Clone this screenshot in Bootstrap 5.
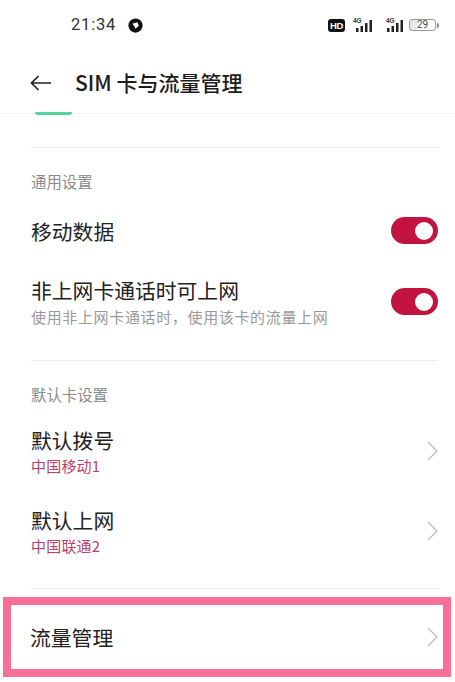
<!DOCTYPE html>
<html lang="zh-CN"><head><meta charset="utf-8">
<link rel="stylesheet" href="https://cdn.jsdelivr.net/npm/bootstrap@5.3.0/dist/css/bootstrap.min.css">
<style>
html,body{height:682px;overflow:hidden;background:#fff}
body{width:455px;font-family:"Noto Sans CJK SC","Noto Sans",sans-serif;color:#222}
.stat{height:52px;padding:0 16px 2px 71px}
.clock{font-family:Roboto,sans-serif;font-size:16.5px;letter-spacing:.8px;color:#333;line-height:1}
.dot{margin-left:12px}
.hd{font:700 9.5px/13px "Liberation Sans",sans-serif;background:#111;color:#fff;border-radius:3px;width:17px;height:13px;text-align:center;letter-spacing:-.3px}
.sig{position:relative;width:20px;height:13px;margin-left:8px}
.sig svg{display:block}
.sig b{position:absolute;left:0;top:-1px;font:700 6.5px/1 "Liberation Sans",sans-serif;color:#333}
.sig2{width:21px;margin-left:10px}
.sig2 b{left:3px}
.batt{width:27px;height:12px;margin-left:5px;border:1.3px solid #999;border-radius:3px;font:400 10px/10px Roboto,sans-serif;color:#444;text-align:center;background:linear-gradient(90deg,#e8e8e8 29%,#fff 29%)}
.nub{width:2px;height:5px;background:#888;border-radius:0 2px 2px 0;margin-left:1px}
.head{height:62px;padding-left:30px;border-bottom:1px solid #f4f4f4}
.ttl{font-size:21px;font-weight:500;line-height:1;margin-left:24px;color:#1c1c1c}
.peek{height:3px;width:37px;margin:-2px 0 0 35px;background:#55d69c;border-radius:0 0 4px 4px}
.rule{height:1px;background:#eee;margin:0 17px 0 31px}
.cap{font-size:15.4px;line-height:20px;color:#8a8a8a;padding:0 17px 0 31px}
.item{padding:0 17px 0 31px}
.nm{font-size:20.8px;line-height:26px;color:#222}
.sb{font-size:15px;line-height:18px;letter-spacing:.65px;color:#999;margin-top:5px}
.sim{font-size:15px;line-height:18px;letter-spacing:.2px;color:#b8426c;margin-top:4px}
.tog{width:47px;height:27px;background:#c2143f;border-radius:14px;flex:none;padding-right:5px}
.tog i{display:block;width:18px;height:18px;border-radius:50%;background:#fff}
.gap32{height:32px}.gap23{height:23px}.gap34{height:34px}.gap33{height:33px}
.mt26{margin-top:26px}.mt32{margin-top:32px}.mt33{margin-top:33px}.mt23{margin-top:23px}
.hilite{height:80px;margin:8px 4px 0 3px;border:8px solid #f87098;padding:0 5px 0 19px}
</style></head><body>
<div class="stat d-flex align-items-center justify-content-between">
 <div class="d-flex align-items-center"><span class="clock">21:34</span>
  <svg class="dot" width="15" height="15" viewBox="0 0 16 16"><circle cx="8" cy="8" r="7.6" fill="#111"/><path d="M4.6 6.2 9.8 4.4 11.6 8 8 11.4 6.6 8.4Z" fill="#fff"/></svg></div>
 <div class="d-flex align-items-center">
  <span class="hd">HD</span>
  <span class="sig"><b>4G</b><svg width="20" height="13" viewBox="0 0 20 13"><path fill="#222" d="M3 9h2.5v4H3zM7.500 7h2.500v6H7.500zM12 4h2.500v9H12zM16.500 1H19v12h-2.500z"/></svg></span>
  <span class="sig sig2"><b>4G</b><svg width="21" height="13" viewBox="0 0 21 13"><path fill="#222" d="M4 9h2.500v4H4zM8.500 7H11v6H8.500zM13 4h2.500v9H13zM17.500 1H20v12h-2.500z"/></svg></span>
  <span class="batt">29</span><span class="nub"></span>
 </div>
</div>
<div class="head d-flex align-items-center">
 <svg width="21" height="16" viewBox="0 0 21 16" fill="none" stroke="#222" stroke-width="1.7"><path d="M21 8H1.500M8.500 1 1.500 8l7 7"/></svg>
 <span class="ttl">SIM 卡与流量管理</span>
</div>
<div class="peek"></div>
<div class="gap32"></div>
<div class="rule"></div>
<div class="gap23"></div>
<div class="cap">通用设置</div>
<div class="item mt26 d-flex align-items-center justify-content-between">
 <span class="nm">移动数据</span><span class="tog d-flex align-items-center justify-content-end"><i></i></span>
</div>
<div class="item mt33 d-flex align-items-center justify-content-between">
 <div><div class="nm">非上网卡通话时可上网</div><div class="sb">使用非上网卡通话时，使用该卡的流量上网</div></div>
 <span class="tog d-flex align-items-center justify-content-end"><i></i></span>
</div>
<div class="gap34"></div>
<div class="rule"></div>
<div class="gap23"></div>
<div class="cap">默认卡设置</div>
<div class="item mt23 d-flex align-items-center justify-content-between">
 <div><div class="nm">默认拨号</div><div class="sim">中国移动1</div></div>
 <svg width="11" height="20" viewBox="0 0 11 20" fill="none" stroke="#bdbdbd" stroke-width="1.4"><path d="M1 1l9 9-9 9"/></svg>
</div>
<div class="item mt32 d-flex align-items-center justify-content-between">
 <div><div class="nm">默认上网</div><div class="sim">中国联通2</div></div>
 <svg width="11" height="20" viewBox="0 0 11 20" fill="none" stroke="#bdbdbd" stroke-width="1.4"><path d="M1 1l9 9-9 9"/></svg>
</div>
<div class="gap33"></div>
<div class="rule"></div>
<div class="hilite d-flex align-items-center justify-content-between">
 <span class="nm">流量管理</span>
 <svg width="11" height="20" viewBox="0 0 11 20" fill="none" stroke="#bdbdbd" stroke-width="1.4"><path d="M1 1l9 9-9 9"/></svg>
</div>
<script src="https://cdn.jsdelivr.net/npm/bootstrap@5.3.0/dist/js/bootstrap.bundle.min.js"></script>
</body></html>
